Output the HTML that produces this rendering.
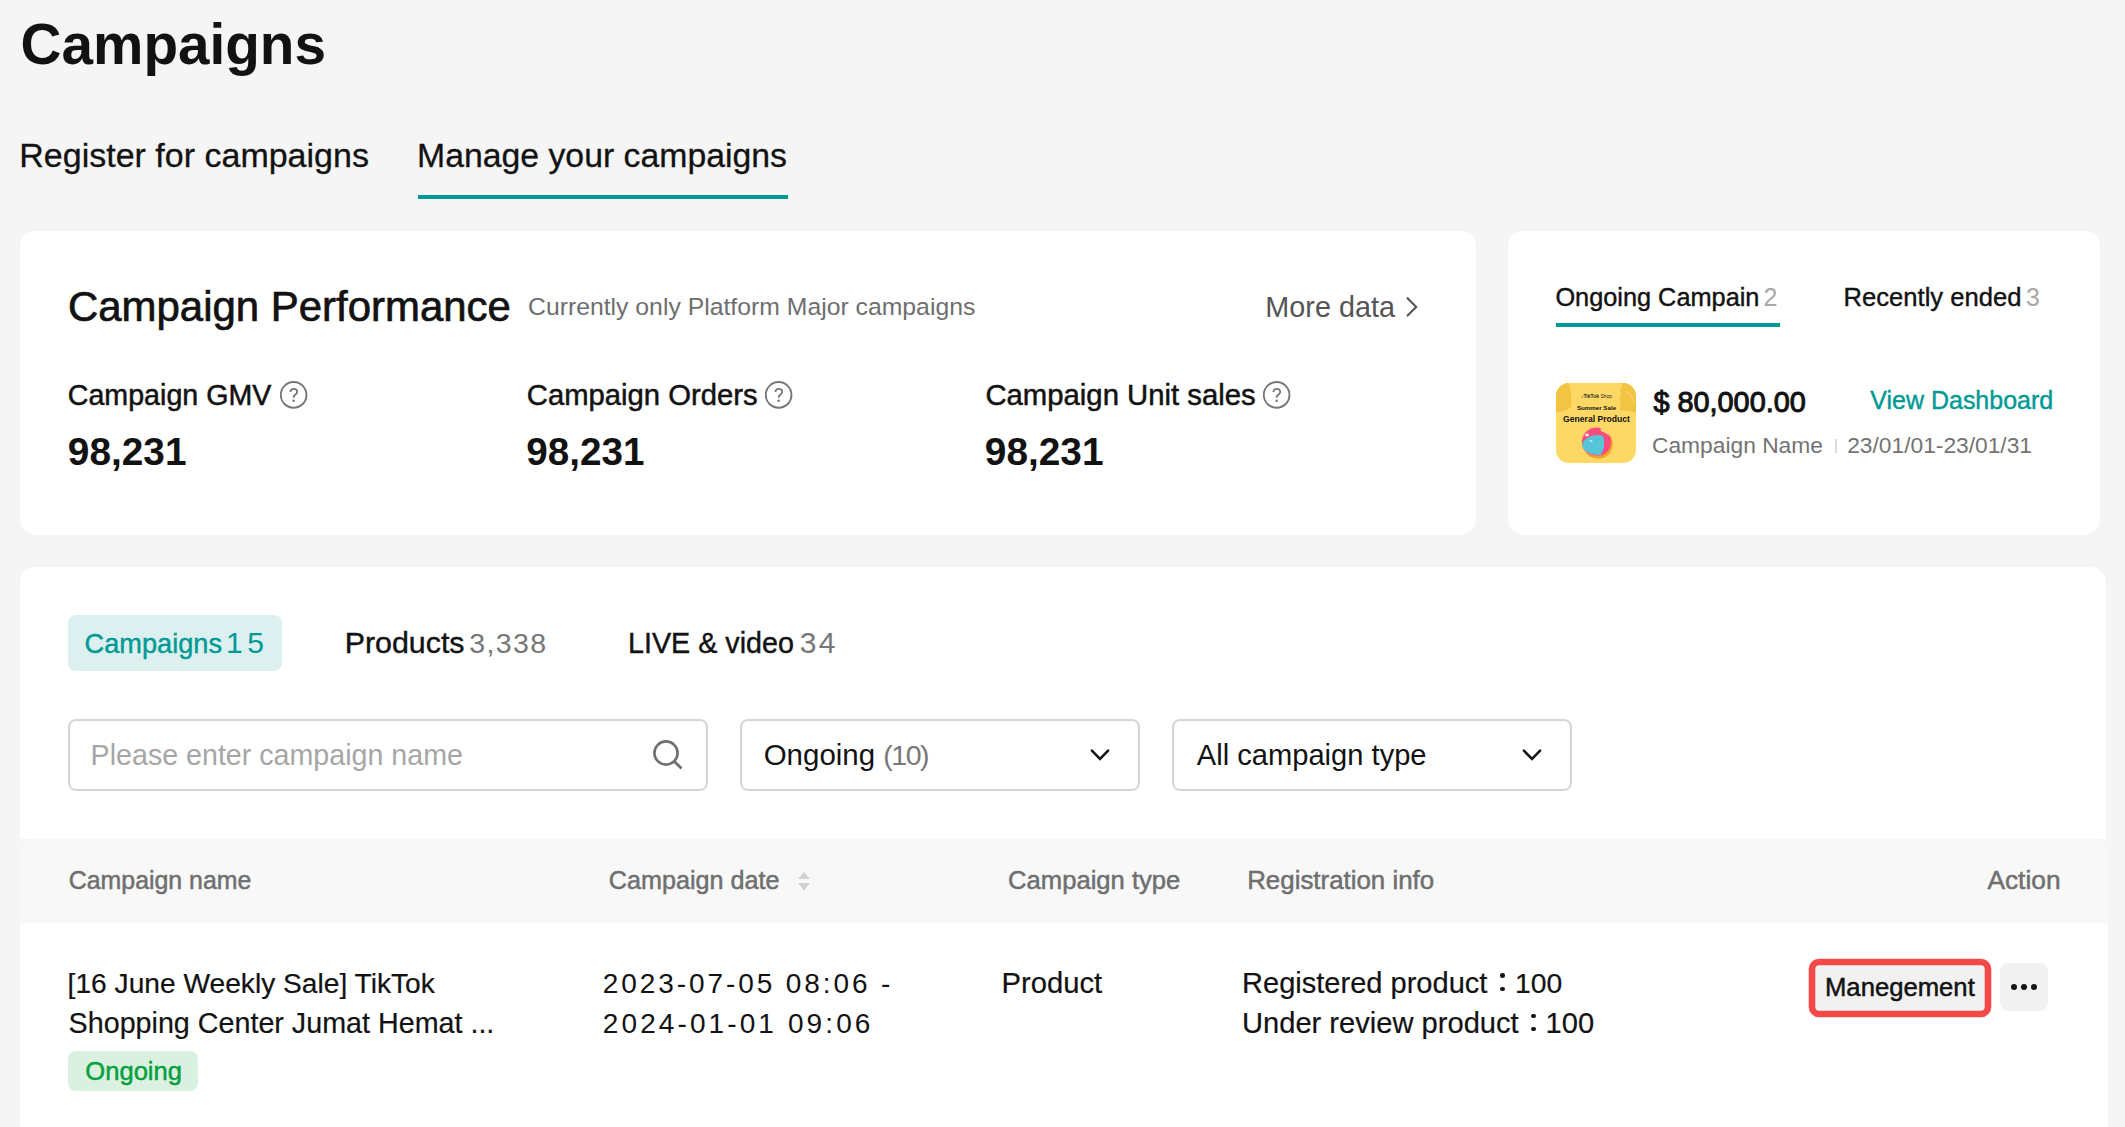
<!DOCTYPE html>
<html><head><meta charset="utf-8"><style>
html,body{margin:0;padding:0;width:2125px;height:1127px;overflow:hidden;background:#f5f5f5;}
body{position:relative;font-family:"Liberation Sans",sans-serif;}
.t{position:absolute;white-space:nowrap;line-height:1;}
.r{position:absolute;}
.card{position:absolute;background:#fff;border-radius:16px;}
</style></head><body>
<div class="t" style="left:20.60px;top:17.02px;font-size:56.67px;color:#121212;font-weight:700;">Campaigns</div>
<div class="t" style="left:19.30px;top:137.60px;font-size:34.01px;color:#121212;-webkit-text-stroke:0.3px #121212;">Register for campaigns</div>
<div class="t" style="left:417.00px;top:138.79px;font-size:33.79px;color:#121212;-webkit-text-stroke:0.3px #121212;">Manage your campaigns</div>
<div class="r" style="left:418px;top:195px;width:370px;height:4px;background:#009995"></div>
<div class="card" style="left:20px;top:231px;width:1456px;height:304px"></div>
<div class="t" style="left:68.00px;top:286.48px;font-size:41.95px;color:#121212;-webkit-text-stroke:0.7px #121212;">Campaign Performance</div>
<div class="t" style="left:528.00px;top:294.72px;font-size:24.78px;color:#6e6e6e;">Currently only Platform Major campaigns</div>
<div class="t" style="left:1265.30px;top:292.50px;font-size:28.81px;color:#555555;">More data</div>
<svg class="r" style="left:1403.2px;top:294.6px" width="18" height="24" viewBox="0 0 18 24"><path d="M4.6 3.2 L13.2 11.9 L4.6 20.6" fill="none" stroke="#555" stroke-width="2.1" stroke-linecap="round"/></svg>
<div class="t" style="left:67.80px;top:380.88px;font-size:28.61px;color:#121212;-webkit-text-stroke:0.5px #121212;">Campaign GMV</div>
<svg class="r" style="left:280px;top:381px" width="28" height="28" viewBox="0 0 28 28"><circle cx="13.6" cy="13.9" r="12.85" fill="none" stroke="#767676" stroke-width="1.9"/><path d="M10.4 11 C10.6 9 12 7.9 13.6 7.9 C15.6 7.9 17.2 9.2 17.2 11 C17.2 12.8 15.6 13.4 14.4 14.5 C13.7 15.1 13.6 15.8 13.6 16.8" fill="none" stroke="#767676" stroke-width="1.8"/><circle cx="13.6" cy="19.7" r="1.25" fill="#767676"/></svg>
<div class="t" style="left:67.80px;top:432.90px;font-size:38.85px;color:#121212;font-weight:700;">98,231</div>
<div class="t" style="left:526.80px;top:381.35px;font-size:29.24px;color:#121212;-webkit-text-stroke:0.5px #121212;">Campaign Orders</div>
<svg class="r" style="left:765px;top:381px" width="28" height="28" viewBox="0 0 28 28"><circle cx="13.6" cy="13.9" r="12.85" fill="none" stroke="#767676" stroke-width="1.9"/><path d="M10.4 11 C10.6 9 12 7.9 13.6 7.9 C15.6 7.9 17.2 9.2 17.2 11 C17.2 12.8 15.6 13.4 14.4 14.5 C13.7 15.1 13.6 15.8 13.6 16.8" fill="none" stroke="#767676" stroke-width="1.8"/><circle cx="13.6" cy="19.7" r="1.25" fill="#767676"/></svg>
<div class="t" style="left:526.20px;top:433.04px;font-size:38.69px;color:#121212;font-weight:700;">98,231</div>
<div class="t" style="left:985.40px;top:380.29px;font-size:29.30px;color:#121212;-webkit-text-stroke:0.5px #121212;">Campaign Unit sales</div>
<svg class="r" style="left:1263px;top:381px" width="28" height="28" viewBox="0 0 28 28"><circle cx="13.6" cy="13.9" r="12.85" fill="none" stroke="#767676" stroke-width="1.9"/><path d="M10.4 11 C10.6 9 12 7.9 13.6 7.9 C15.6 7.9 17.2 9.2 17.2 11 C17.2 12.8 15.6 13.4 14.4 14.5 C13.7 15.1 13.6 15.8 13.6 16.8" fill="none" stroke="#767676" stroke-width="1.8"/><circle cx="13.6" cy="19.7" r="1.25" fill="#767676"/></svg>
<div class="t" style="left:984.80px;top:432.90px;font-size:38.85px;color:#121212;font-weight:700;">98,231</div>
<div class="card" style="left:1508px;top:231px;width:592px;height:304px"></div>
<div class="t" style="left:1555.40px;top:285.06px;font-size:25.32px;color:#121212;-webkit-text-stroke:0.4px #121212;">Ongoing Campain</div>
<div class="t" style="left:1763.40px;top:285.33px;font-size:25.00px;color:#a8a8a8;">2</div>
<div class="r" style="left:1556px;top:323px;width:224px;height:4px;background:#009995"></div>
<div class="t" style="left:1843.60px;top:284.83px;font-size:25.60px;color:#121212;-webkit-text-stroke:0.4px #121212;">Recently ended</div>
<div class="t" style="left:2026.00px;top:285.33px;font-size:25.00px;color:#a8a8a8;">3</div>
<div class="t" style="left:1653.40px;top:387.97px;font-size:28.85px;color:#121212;-webkit-text-stroke:1.0px #121212;">$ 80,000.00</div>
<div class="t" style="left:1870.30px;top:387.84px;font-size:24.99px;color:#009995;-webkit-text-stroke:0.4px #009995;">View Dashboard</div>
<div class="t" style="left:1652.00px;top:433.60px;font-size:22.79px;color:#737373;">Campaign Name</div>
<div class="r" style="left:1835px;top:439px;width:2px;height:14px;background:#dddddd"></div>
<div class="t" style="left:1847.20px;top:433.62px;font-size:22.77px;color:#737373;">23/01/01-23/01/31</div>
<svg class="r" style="left:1556px;top:383px" width="80" height="80" viewBox="0 0 80 80">
<defs><clipPath id="cp"><rect x="0" y="0" width="80" height="80" rx="13"/></clipPath>
<clipPath id="bc"><circle cx="40.5" cy="59" r="14.6"/></clipPath></defs>
<g clip-path="url(#cp)">
<rect width="80" height="80" fill="#fdd865"/>
<path d="M0 0 L12 0 C16 4 13 8 16 12 C14 16 17 20 14 25 C10 28 5 29 0 29 Z" fill="#f3c443"/>
<path d="M66 0 L80 0 L80 30 C76 28 70 28 64 27 C66 21 62 16 65 10 C63 6 67 3 66 0 Z" fill="#f3c443"/>
<path d="M70 8 C74 10 77 14 78 20" stroke="#f8d36a" stroke-width="1.2" fill="none"/>
</g>
<text x="40.5" y="15" font-family="Liberation Sans" font-size="5" font-weight="700" text-anchor="middle" fill="#2a2a2a">&#9834;TikTok <tspan font-weight="400">Shop</tspan></text>
<text x="40.5" y="27" font-family="Liberation Sans" font-size="6.2" font-weight="700" text-anchor="middle" fill="#151515">Summer Sale</text>
<text x="40.5" y="38.5" font-family="Liberation Sans" font-size="8.6" font-weight="700" text-anchor="middle" fill="#111">General Product</text>
<circle cx="42" cy="61" r="14.8" fill="#f2a424"/>
<circle cx="40.5" cy="59" r="14.6" fill="#fa4c7c"/>
<g clip-path="url(#bc)">
<path d="M26 61 C30 53 40 50.5 47 53 C49 59 48.5 66 45 71.5 C38 73 30 70 26 64.5 Z" fill="#56c5da"/>
<path d="M26 66 C32 72 40 74 46 72 L52 70 L52 80 L20 80 Z" fill="#f6b53a"/>
<path d="M44 43 C50 45 54 49 56 55 C52 51 48 49 45 48 Z" fill="#ffe07a"/>
</g>
<ellipse cx="31" cy="52" rx="2.2" ry="1.4" fill="#ffffff" opacity="0.8"/>
<ellipse cx="35" cy="58" rx="1.6" ry="1.1" fill="#ffffff" opacity="0.6"/>
</svg>
<div class="card" style="left:20px;top:567px;width:2086px;height:272px;border-radius:16px 16px 0 0"></div>
<div class="r" style="left:20px;top:923px;width:2088px;height:300px;background:#fff"></div>
<div class="r" style="left:68px;top:615px;width:214px;height:56px;background:#dcf0ef;border-radius:8px"></div>
<div class="t" style="left:84.50px;top:629.58px;font-size:27.19px;color:#009995;-webkit-text-stroke:0.4px #009995;">Campaigns</div>
<div class="t" style="left:226.00px;top:628.20px;font-size:30.00px;color:#009995;letter-spacing:4.5px;">15</div>
<div class="t" style="left:344.70px;top:626.87px;font-size:30.38px;color:#121212;-webkit-text-stroke:0.4px #121212;">Products</div>
<div class="t" style="left:469.20px;top:629.47px;font-size:28.50px;color:#777777;letter-spacing:1.40px;">3,338</div>
<div class="t" style="left:628.00px;top:628.88px;font-size:28.72px;color:#121212;-webkit-text-stroke:0.4px #121212;">LIVE &amp; video</div>
<div class="t" style="left:799.70px;top:627.80px;font-size:30.00px;color:#777777;letter-spacing:2.3px;">34</div>
<div class="r" style="left:68px;top:719px;width:640px;height:72px;border:2px solid #d6d6d6;border-radius:8px;box-sizing:border-box"></div>
<div class="t" style="left:90.60px;top:740.76px;font-size:28.63px;color:#a6a6a6;">Please enter campaign name</div>
<svg class="r" style="left:648px;top:735px" width="40" height="40" viewBox="0 0 40 40"><circle cx="18" cy="18" r="11.6" fill="none" stroke="#707070" stroke-width="2.6"/><path d="M26.4 26.4 L33.5 33.5" stroke="#707070" stroke-width="2.8" stroke-linecap="butt"/></svg>
<div class="r" style="left:740px;top:719px;width:400px;height:72px;border:2px solid #d6d6d6;border-radius:8px;box-sizing:border-box"></div>
<div class="t" style="left:763.70px;top:740.35px;font-size:29.47px;color:#121212;">Ongoing</div>
<div class="t" style="left:883.20px;top:741.17px;font-size:28.50px;color:#777777;letter-spacing:-1.42px;">(10)</div>
<svg class="r" style="left:1088px;top:748px" width="24" height="16" viewBox="0 0 24 16"><path d="M3.9 2.7 L12 10.8 L20.1 2.7" fill="none" stroke="#161616" stroke-width="2.6" stroke-linecap="round"/></svg>
<div class="r" style="left:1172px;top:719px;width:400px;height:72px;border:2px solid #d6d6d6;border-radius:8px;box-sizing:border-box"></div>
<div class="t" style="left:1196.80px;top:740.65px;font-size:29.12px;color:#121212;">All campaign type</div>
<svg class="r" style="left:1520px;top:748px" width="24" height="16" viewBox="0 0 24 16"><path d="M3.9 2.7 L12 10.8 L20.1 2.7" fill="none" stroke="#161616" stroke-width="2.6" stroke-linecap="round"/></svg>
<div class="r" style="left:20px;top:839px;width:2088px;height:84px;background:#f8f8f8;border-radius:14px 14px 0 0"></div>
<div class="t" style="left:68.80px;top:868.13px;font-size:24.89px;color:#6f6f6f;-webkit-text-stroke:0.5px #6f6f6f;">Campaign name</div>
<div class="t" style="left:608.80px;top:867.90px;font-size:25.16px;color:#6f6f6f;-webkit-text-stroke:0.5px #6f6f6f;">Campaign date</div>
<svg class="r" style="left:796px;top:870px" width="16" height="22" viewBox="0 0 16 22"><path d="M2 9 L8 2 L14 9 Z" fill="#d2d2d2"/><path d="M2 13 L8 20.5 L14 13 Z" fill="#d2d2d2"/></svg>
<div class="t" style="left:1008.10px;top:867.51px;font-size:25.62px;color:#6f6f6f;-webkit-text-stroke:0.5px #6f6f6f;">Campaign type</div>
<div class="t" style="left:1247.20px;top:868.29px;font-size:25.88px;color:#6f6f6f;-webkit-text-stroke:0.5px #6f6f6f;">Registration info</div>
<div class="t" style="left:1987.40px;top:866.91px;font-size:26.32px;color:#6f6f6f;-webkit-text-stroke:0.5px #6f6f6f;">Action</div>
<div class="t" style="left:67.60px;top:970.25px;font-size:28.16px;color:#121212;-webkit-text-stroke:0.2px #121212;">[16 June Weekly Sale] TikTok</div>
<div class="t" style="left:68.60px;top:1008.71px;font-size:28.69px;color:#121212;-webkit-text-stroke:0.2px #121212;">Shopping Center Jumat Hemat ...</div>
<div class="r" style="left:68px;top:1051px;width:130px;height:40px;background:#daf1e2;border-radius:8px"></div>
<div class="t" style="left:85.30px;top:1058.83px;font-size:25.59px;color:#08a03c;-webkit-text-stroke:0.5px #08a03c;">Ongoing</div>
<div class="t" style="left:602.80px;top:969.69px;font-size:28.00px;color:#121212;letter-spacing:2.91px;">2023-07-05 08:06 -</div>
<div class="t" style="left:602.80px;top:1009.59px;font-size:28.00px;color:#121212;letter-spacing:3.10px;">2024-01-01 09:06</div>
<div class="t" style="left:1001.50px;top:969.27px;font-size:29.21px;color:#121212;-webkit-text-stroke:0.2px #121212;">Product</div>
<div class="t" style="left:1242.00px;top:969.00px;font-size:29.06px;color:#121212;-webkit-text-stroke:0.2px #121212;">Registered product</div>
<div class="r" style="left:1500.1px;top:973.3px;width:4.6px;height:4.6px;border-radius:50%;background:#121212"></div><div class="r" style="left:1500.1px;top:986.8px;width:4.6px;height:4.6px;border-radius:50%;background:#121212"></div>
<div class="t" style="left:1515.00px;top:968.62px;font-size:28.32px;color:#121212;-webkit-text-stroke:0.2px #121212;">100</div>
<div class="t" style="left:1242.00px;top:1009.15px;font-size:29.12px;color:#121212;-webkit-text-stroke:0.2px #121212;">Under review product</div>
<div class="r" style="left:1531px;top:1013.5px;width:4.6px;height:4.6px;border-radius:50%;background:#121212"></div><div class="r" style="left:1531px;top:1026.9px;width:4.6px;height:4.6px;border-radius:50%;background:#121212"></div>
<div class="t" style="left:1545.60px;top:1009.14px;font-size:29.13px;color:#121212;-webkit-text-stroke:0.2px #121212;">100</div>
<svg class="r" style="left:1800px;top:950px" width="200" height="76" viewBox="0 0 200 76"><rect x="12" y="12" width="176" height="52" rx="7" fill="#f1f1f1" stroke="#f34a48" stroke-width="6.6"/></svg>
<div class="t" style="left:1825.00px;top:974.77px;font-size:25.67px;color:#121212;-webkit-text-stroke:0.5px #121212;">Manegement</div>
<div class="r" style="left:2000px;top:963px;width:48px;height:48px;background:#f1f1f1;border-radius:8px"></div>
<div class="r" style="left:2011px;top:984px;width:6px;height:6px;border-radius:50%;background:#121212"></div>
<div class="r" style="left:2021px;top:984px;width:6px;height:6px;border-radius:50%;background:#121212"></div>
<div class="r" style="left:2031px;top:984px;width:6px;height:6px;border-radius:50%;background:#121212"></div>
</body></html>
